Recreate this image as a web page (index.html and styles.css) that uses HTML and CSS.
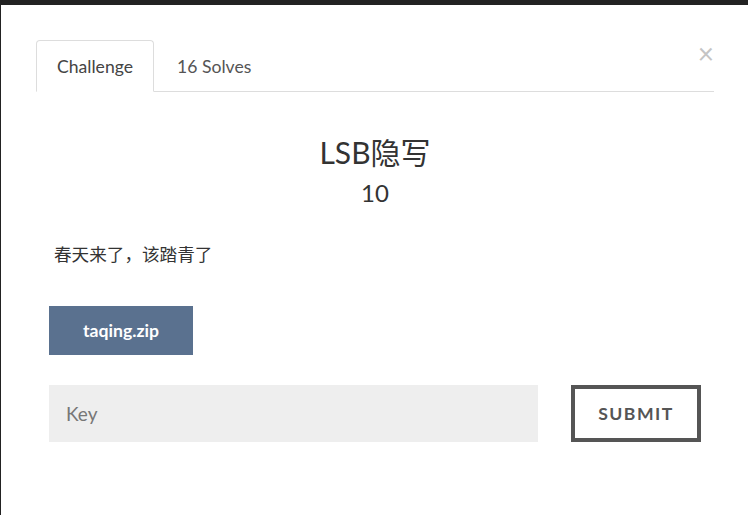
FILE: index.html
```html
<!DOCTYPE html>
<html>
<head>
<meta charset="utf-8">
<link rel="stylesheet" href="styles.css">
</head>
<body>
<div class="modal">
  <button class="close" type="button">×</button>
  <ul class="nav-tabs">
    <li class="tab active">Challenge</li>
    <li class="tab">16 Solves</li>
  </ul>
  <div class="tab-content">
    <h3 class="title">LSB隐写</h3>
    <h4 class="value">10</h4>
    <p class="desc">春天来了，该踏青了</p>
    <div class="files">
      <a class="file-btn">taqing.zip</a>
    </div>
    <form class="submit-row">
      <input class="key-input" type="text" placeholder="Key">
      <button class="submit-btn" type="button">SUBMIT</button>
    </form>
  </div>
</div>
</body>
</html>
```
FILE: styles.css
```css
html, body {
  margin: 0;
  padding: 0;
  height: 100%;
}
body {
  background: #222;
  font-family: Lato, "Noto Sans CJK SC", sans-serif;
  color: #333;
  overflow: hidden;
}
.modal {
  position: relative;
  margin: 5px 0 0 1px;
  height: 510px;
  background: #fff;
  padding: 35px 34px 0 35px;
  box-sizing: border-box;
}
.close {
  position: absolute;
  top: 33px;
  right: 34px;
  border: 0;
  background: none;
  padding: 0;
  font-family: Lato, sans-serif;
  font-size: 28px;
  line-height: 30px;
  color: #c4c4c4;
}
.nav-tabs {
  list-style: none;
  margin: 0;
  padding: 0;
  display: flex;
  border-bottom: 1px solid #ddd;
}
.tab {
  padding: 16px 20px 14px;
  line-height: 20px;
  font-size: 17.6px;
  color: #555;
  border: 1px solid transparent;
  border-radius: 4px 4px 0 0;
  margin: 0 2px -1px 0;
}
.tab.active {
  border-color: #ddd #ddd #fff;
  color: #444;
}
.tab-content {
  padding: 0 13px;
}
.title {
  margin: 42px 0 0;
  text-align: center;
  font-size: 30px;
  font-weight: 400;
  line-height: 36px;
  color: #333;
}
.value {
  margin: 9px 0 0;
  text-align: center;
  font-size: 24px;
  font-weight: 400;
  line-height: 28px;
  color: #333;
}
.desc {
  margin: 35px 0 0;
  padding-left: 5px;
  font-size: 17.6px;
  line-height: 26px;
  color: #333;
}
.files {
  margin-top: 38px;
  display: flex;
}
.file-btn {
  display: flex;
  align-items: center;
  justify-content: center;
  width: 144px;
  height: 49px;
  background: #5a718f;
  color: #fff;
  font-weight: 700;
  font-size: 17.6px;
}
.submit-row {
  margin: 30px 0 0;
  display: flex;
  justify-content: space-between;
}
.key-input {
  width: 489px;
  height: 57px;
  box-sizing: border-box;
  border: 0;
  background: #eee;
  padding: 0 17px;
  font-family: Lato, sans-serif;
  font-size: 19px;
  color: #555;
  outline: none;
}
.key-input::placeholder {
  color: #777;
}
.submit-btn {
  width: 130px;
  height: 57px;
  box-sizing: border-box;
  border: 4px solid #555;
  background: #fff;
  font-family: Lato, sans-serif;
  font-weight: 700;
  font-size: 17.6px;
  letter-spacing: 1.5px;
  color: #555;
  padding: 0;
}
```
